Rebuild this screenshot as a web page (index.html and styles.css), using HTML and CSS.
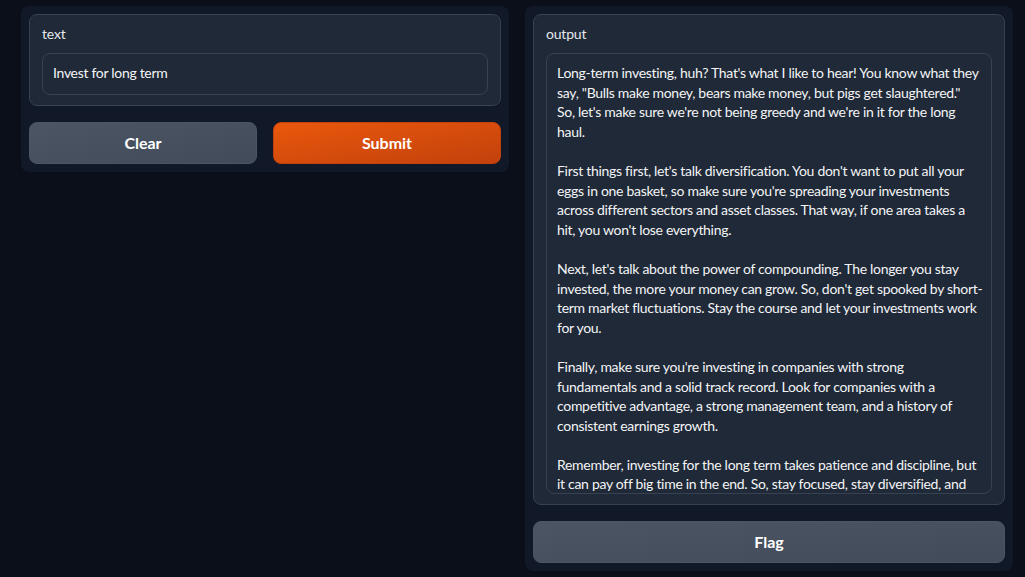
FILE: index.html
```html
<!DOCTYPE html>
<html lang="en">
<head>
<meta charset="utf-8">
<title>Gradio</title>
<link rel="stylesheet" href="styles.css">
</head>
<body>
<div class="app">
  <div class="panel">
    <div class="block">
      <div class="label">text</div>
      <div class="input">Invest for long term</div>
    </div>
    <div class="buttons">
      <button class="btn btn-secondary">Clear</button>
      <button class="btn btn-primary">Submit</button>
    </div>
  </div>
  <div class="panel">
    <div class="block">
      <div class="label">output</div>
      <div class="textarea"><div class="content">Long-term investing, huh? That's what I like to hear! You know what they
say, "Bulls make money, bears make money, but pigs get slaughtered."
So, let's make sure we're not being greedy and we're in it for the long
haul.

First things first, let's talk diversification. You don't want to put all your
eggs in one basket, so make sure you're spreading your investments
across different sectors and asset classes. That way, if one area takes a
hit, you won't lose everything.

Next, let's talk about the power of compounding. The longer you stay
invested, the more your money can grow. So, don't get spooked by short-
term market fluctuations. Stay the course and let your investments work
for you.

Finally, make sure you're investing in companies with strong
fundamentals and a solid track record. Look for companies with a
competitive advantage, a strong management team, and a history of
consistent earnings growth.

Remember, investing for the long term takes patience and discipline, but
it can pay off big time in the end. So, stay focused, stay diversified, and</div></div>
    </div>
    <button class="btn btn-secondary btn-full">Flag</button>
  </div>
</div>
</body>
</html>
```
FILE: styles.css
```css
* { box-sizing: border-box; }
html, body { margin: 0; height: 100%; }
body {
  background: #0b0f19;
  font-family: "Lato", "Liberation Sans", sans-serif;
  color: #e5e7eb;
  font-size: 14px;
}
.app {
  display: flex;
  align-items: flex-start;
  gap: 16px;
  padding: 6px 12px 0 21px;
}
.panel {
  flex: 1 1 0;
  min-width: 0;
  background: #111827;
  border-radius: 8px;
  padding: 8px;
  display: flex;
  flex-direction: column;
  gap: 16px;
}
.block {
  background: #1f2937;
  border: 1px solid #374151;
  border-radius: 8px;
  padding: 10px 12px 10px;
}
.label {
  font-size: 14px;
  line-height: 18px;
  color: #e5e7eb;
  margin-bottom: 10px;
  letter-spacing: -0.2px;
}
.input {
  border: 1px solid #374151;
  border-radius: 8px;
  background: #1f2937;
  height: 42px;
  padding: 0 10px 2px;
  display: flex;
  align-items: center;
  line-height: 20px;
  letter-spacing: -0.3px;
  color: #f3f4f6;
}
.textarea {
  border: 1px solid #374151;
  border-radius: 8px;
  background: #1f2937;
  height: 441px;
  overflow: hidden;
  padding: 9px 10px 0;
}
.content {
  white-space: pre;
  line-height: 19.6px;
  color: #f3f4f6;
  letter-spacing: -0.3px;
}
.buttons {
  display: flex;
  gap: 16px;
}
.btn {
  flex: 1 1 0;
  height: 42px;
  border-radius: 8px;
  padding: 0 0 2px;
  font-family: inherit;
  font-size: 16px;
  font-weight: 700;
  color: #ffffff;
  cursor: pointer;
}
.btn-secondary {
  background: linear-gradient(to bottom right, #4b5563, #414b59);
  border: 1px solid #4b5563;
}
.btn-primary {
  background: linear-gradient(to bottom right, #ea580c, #c2410c);
  border: 1px solid #c2410c;
}
.btn-full { flex: none; width: 100%; }
```
